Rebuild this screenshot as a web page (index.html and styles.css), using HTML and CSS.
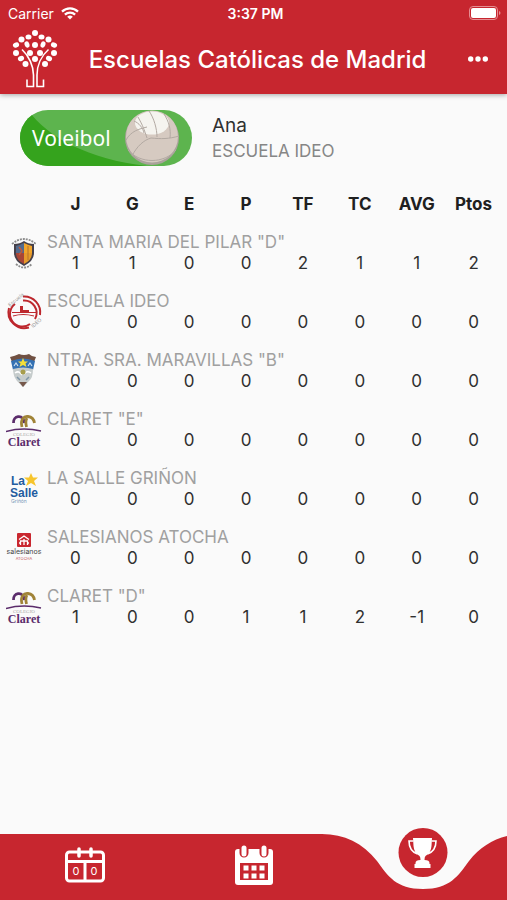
FILE: index.html
```html
<!DOCTYPE html>
<html lang="es">
<head>
    <meta charset="UTF-8">
    <meta name="viewport" content="width=device-width, initial-scale=1.0">
    <title>Escuelas Católicas de Madrid</title>
    <link rel="stylesheet" href="styles.css">
</head>
<body>
    <header class="header">
        <div class="status">
            <div class="carrier">
                Carrier
                <svg width="18" height="13" viewBox="0 0 18 13" fill="none" stroke="#fff" stroke-width="2.3">
                    <path d="M1 4.6a11.6 11.6 0 0 1 16 0"/>
                    <path d="M3.9 7.7a7.4 7.4 0 0 1 10.2 0"/>
                    <path d="M6.2 9.8a4 4 0 0 1 5.6 0L9 12.6z" fill="#fff" stroke="none"/>
                </svg>
            </div>
            <div class="clock">3:37 PM</div>
            <div class="battery">
                <svg width="32" height="14" viewBox="0 0 32 14">
                    <rect x=".5" y=".5" width="28" height="13" rx="3.5" fill="none" stroke="#e58d92"/>
                    <rect x="2" y="2" width="25" height="10" rx="2" fill="#fff"/>
                    <path d="M30 5v4q1.500-.5 1.500-2T30 5z" fill="#e58d92"/>
                </svg>
            </div>
        </div>
        <div class="title-bar">
            <svg class="logo" width="46" height="60" viewBox="0 0 46 60">
                <g fill="#fff">
                    <circle cx="23" cy="4" r="3"/>
                    <ellipse cx="16.500" cy="8" rx="3" ry="2.500"/>
                    <ellipse cx="29.500" cy="8" rx="3" ry="2.500"/>
                    <circle cx="9.500" cy="10.500" r="3"/>
                    <circle cx="36.500" cy="10.500" r="3"/>
                    <circle cx="23" cy="16" r="3"/>
                    <ellipse cx="15" cy="15.500" rx="2.400" ry="3.200" transform="rotate(-20 15 15.500)"/>
                    <ellipse cx="31" cy="15.500" rx="2.400" ry="3.200" transform="rotate(20 31 15.500)"/>
                    <ellipse cx="4" cy="16" rx="3.200" ry="2.500" transform="rotate(-25 4 16)"/>
                    <ellipse cx="42" cy="16" rx="3.200" ry="2.500" transform="rotate(25 42 16)"/>
                    <circle cx="4" cy="24" r="3"/>
                    <circle cx="42" cy="24" r="3"/>
                    <circle cx="18" cy="24" r="3"/>
                    <circle cx="28" cy="24" r="3"/>
                    <circle cx="23" cy="30" r="3"/>
                    <ellipse cx="9" cy="29.500" rx="3.200" ry="2.500" transform="rotate(-30 9 29.500)"/>
                    <ellipse cx="37" cy="29.500" rx="3.200" ry="2.500" transform="rotate(30 37 29.500)"/>
                    <circle cx="13.500" cy="35" r="3"/>
                    <circle cx="33" cy="35" r="3"/>
                </g>
                <g fill="none" stroke="#fff" stroke-width="1.600">
                    <path d="M10 20.500C17 27 21.500 37 21.500 46v11.500h-6.500v-7"/>
                    <path d="M36.500 20.500C29 27 25 37 25 46v11.500h6.500v-7"/>
                </g>
            </svg>
            <h1 class="title">Escuelas Católicas de Madrid</h1>
            <button class="menu" type="button" aria-label="Menú">
                <svg width="20" height="6" viewBox="0 0 20 6" fill="#fff">
                    <circle cx="2.700" cy="3" r="2.700"/><circle cx="10" cy="3" r="2.700"/><circle cx="17.300" cy="3" r="2.700"/>
                </svg>
            </button>
        </div>
    </header>

    <!-- shared logo, used by both Claret teams -->
    <svg class="defs" aria-hidden="true">
        <symbol id="claret" viewBox="0 0 36 36">
            <g fill="none" stroke-width="2.800">
                <path d="M7.500 11C7 4 16.500 1 18.500 11" stroke="#5b2c6b"/>
                <path d="M16 15C14 7 18 4 22 4.500S28 8 28.500 11M21 6Q19 9 20.500 15" stroke="#a08337"/>
                <path d="M0 19.500Q17 15 35 19" stroke="#5b2c6b" stroke-width="1.500"/>
            </g>
            <text x="18" y="24" class="claret-small">COLEGIO</text>
            <text x="18" y="34" class="claret-name">Claret</text>
        </symbol>
    </svg>

    <main class="content">
        <section class="profile">
            <button class="sport" type="button">
                <svg class="sport-bg" viewBox="0 0 171 56" preserveAspectRatio="none">
                    <rect width="171" height="56" fill="#5db44e"/>
                    <path d="M0 0h8C28 28 68 49 126 56H0z" fill="#35a31d"/>
                </svg>
                <span class="sport-name">Voleibol</span>
                <svg class="ball" width="56" height="56" viewBox="0 0 56 56">
                    <circle cx="28" cy="28" r="27" fill="#aaa29b"/>
                    <circle cx="28" cy="26.500" r="26" fill="#d6cac1"/>
                    <ellipse cx="28" cy="13" rx="17" ry="11.500" fill="#f5f4ef"/>
                    <g fill="none" stroke="#b2a9a2">
                        <path d="M2 30C7 21 15 19 23 17M14 7c5 9 6 12 9 21M25 1c5 7 8 18 8 26M40 4c5 8 7 15 6 24"/>
                        <path d="M8 46c5-10 12-16 19-18 10 1 18 1 28-2M10 11c5 2 9 7 10 12"/>
                        <path d="M4 40c12 14 36 14 48 0"/>
                    </g>
                </svg>
            </button>
            <div class="player">
                <div class="player-name">Ana</div>
                <div class="player-school">ESCUELA IDEO</div>
            </div>
        </section>

        <table class="standings">
            <thead>
                <tr>
                    <td class="logo-col"></td>
                    <th scope="col">J</th>
                    <th scope="col">G</th>
                    <th scope="col">E</th>
                    <th scope="col">P</th>
                    <th scope="col">TF</th>
                    <th scope="col">TC</th>
                    <th scope="col">AVG</th>
                    <th scope="col">Ptos</th>
                </tr>
            </thead>
            <tbody>
                <tr>
                    <td class="team-logo" rowspan="2">
                        <svg width="36" height="36" viewBox="0 0 36 36">
                            <path d="M6 9Q18-1 30 9M10 29q8 7 16 0" fill="none" stroke="#8b8b8b" stroke-width="1.800" stroke-dasharray="2 1"/>
                            <path d="M8 9q6 0 10-3 4 3 10 3v9q0 8-10 13-10-5-10-13z" fill="#45404a"/>
                            <path d="M10 11q4-1 8-3v10h-8z" fill="#526a8d"/>
                            <path d="M18 8q4 2 8 3v7h-8z" fill="#f1a52b"/>
                            <path d="M10 18h8v11q-8-4-8-11z" fill="#a84536"/>
                            <path d="M18 18h8q0 7-8 11z" fill="#e79a2b"/>
                            <path d="M13 12l3 4-3 4" fill="none" stroke="#c05a3c" stroke-width="1.500"/>
                            <path d="M22 11v14" fill="none" stroke="#b3702c"/>
                        </svg>
                    </td>
                    <th class="team" scope="rowgroup" colspan="8">SANTA MARIA DEL PILAR "D"</th>
                </tr>
                <tr class="values"><td>1</td><td>1</td><td>0</td><td>0</td><td>2</td><td>1</td><td>1</td><td>2</td></tr>
            </tbody>
            <tbody>
                <tr>
                    <td class="team-logo" rowspan="2">
                        <svg width="36" height="36" viewBox="0 0 36 36">
                            <g fill="none" stroke="#bd272d" stroke-width="2">
                                <path d="M17 2.500A16 16 0 0 1 34 21M3 14a16 16 0 0 0 20 19.500"/>
                                <path d="M17 6.500A12.500 12.500 0 0 1 29 25M9 10a12.500 12.500 0 0 0 15 20"/>
                                <path d="M6 18.500h24M7 22q10-3 21 0" stroke-width="1.200"/>
                            </g>
                            <path d="M14 12h3v4h6v3h-9z" fill="#bd272d"/>
                            <text x="4" y="13" class="ideo-text" transform="rotate(-40 4 13)">Escuela</text>
                            <text x="27" y="34" class="ideo-text" transform="rotate(-40 27 34)">IDEO</text>
                        </svg>
                    </td>
                    <th class="team" scope="rowgroup" colspan="8">ESCUELA IDEO</th>
                </tr>
                <tr class="values"><td>0</td><td>0</td><td>0</td><td>0</td><td>0</td><td>0</td><td>0</td><td>0</td></tr>
            </tbody>
            <tbody>
                <tr>
                    <td class="team-logo" rowspan="2">
                        <svg width="36" height="36" viewBox="0 0 36 36">
                            <path d="M4 4q5-1 9-3 5 2 10 0 3 3 7 3l-2 5q-10-4-22 0z" fill="#705042"/>
                            <path d="M5 8q12-5 24 0l-2 9q-9-3-20 0z" fill="#3471b3"/>
                            <path d="M7 16q10-3 20 0 0 9-4 12l-6 6-6-6q-4-5-4-12z" fill="#c6cccc"/>
                            <path d="M17 5l1.500 3.500h3.500l-2.500 2 1 3.500-3.500-2-3.500 2 1-3.500-2.500-2h3.500z" fill="#f5df38"/>
                            <path d="M8 13l2-3 2 3M22 13l2-3 2 3" fill="none" stroke="#cfe0ee" stroke-width="1.200"/>
                            <path d="M9 20q4-3 7 2M18 21q3-4 7-1" fill="none" stroke="#fff" stroke-width="1.500"/>
                            <circle cx="17" cy="19" r="2.500" fill="#a79d4c"/>
                            <path d="M11 24l3 3M23 24l-3 3" fill="none" stroke="#7f96a8" stroke-width="1.500"/>
                            <path d="M13 29h8l-4 5z" fill="#76584b"/>
                        </svg>
                    </td>
                    <th class="team" scope="rowgroup" colspan="8">NTRA. SRA. MARAVILLAS "B"</th>
                </tr>
                <tr class="values"><td>0</td><td>0</td><td>0</td><td>0</td><td>0</td><td>0</td><td>0</td><td>0</td></tr>
            </tbody>
            <tbody>
                <tr>
                    <td class="team-logo" rowspan="2"><svg width="36" height="36"><use href="#claret"/></svg></td>
                    <th class="team" scope="rowgroup" colspan="8">CLARET "E"</th>
                </tr>
                <tr class="values"><td>0</td><td>0</td><td>0</td><td>0</td><td>0</td><td>0</td><td>0</td><td>0</td></tr>
            </tbody>
            <tbody>
                <tr>
                    <td class="team-logo" rowspan="2">
                        <svg width="36" height="36" viewBox="0 0 36 36">
                            <path d="M25 2l2 4.500h5l-4 3.500 2 5-5-3-5 3 2-5-4-3.500h5z" fill="#f7c52d"/>
                            <text x="5" y="14" class="salle-text">La</text>
                            <text x="4" y="26" class="salle-text">Salle</text>
                            <text x="5" y="32" class="salle-small">Griñón</text>
                        </svg>
                    </td>
                    <th class="team" scope="rowgroup" colspan="8">LA SALLE GRIÑON</th>
                </tr>
                <tr class="values"><td>0</td><td>0</td><td>0</td><td>0</td><td>0</td><td>0</td><td>0</td><td>0</td></tr>
            </tbody>
            <tbody>
                <tr>
                    <td class="team-logo" rowspan="2">
                        <svg width="36" height="36" viewBox="0 0 36 36">
                            <rect x="11" y="3" width="14" height="14" rx="1" fill="#c9272f"/>
                            <g fill="none" stroke="#fff" stroke-width="1.300">
                                <path d="M13 9.500l5-3.500 5 3.500M14.500 15v-4h7v4M18 15v-6M13 13h2M21 13h2"/>
                            </g>
                            <text x="18" y="24" class="sales-name">salesianos</text>
                            <text x="18" y="30" class="sales-small">ATOCHA</text>
                        </svg>
                    </td>
                    <th class="team" scope="rowgroup" colspan="8">SALESIANOS ATOCHA</th>
                </tr>
                <tr class="values"><td>0</td><td>0</td><td>0</td><td>0</td><td>0</td><td>0</td><td>0</td><td>0</td></tr>
            </tbody>
            <tbody>
                <tr>
                    <td class="team-logo" rowspan="2"><svg width="36" height="36"><use href="#claret"/></svg></td>
                    <th class="team" scope="rowgroup" colspan="8">CLARET "D"</th>
                </tr>
                <tr class="values"><td>1</td><td>0</td><td>0</td><td>1</td><td>1</td><td>2</td><td>-1</td><td>0</td></tr>
            </tbody>
        </table>
    </main>

    <nav class="tabs">
        <a class="tab" href="#resultados" aria-label="Resultados">
            <svg width="40" height="36" viewBox="0 0 40 36">
                <rect x="1.500" y="5" width="37" height="29" rx="3" fill="none" stroke="#fff" stroke-width="3"/>
                <path d="M2 14.500h36M20 14v20" stroke="#fff" stroke-width="3"/>
                <path d="M14 2v7M26 2v7" stroke="#fff" stroke-width="3.500" stroke-linecap="round"/>
                <text x="11" y="28" class="score">0</text>
                <text x="29" y="28" class="score">0</text>
            </svg>
        </a>
        <a class="tab" href="#calendario" aria-label="Calendario">
            <svg width="40" height="42" viewBox="0 0 40 42">
                <rect x="1" y="5" width="38" height="36" rx="3" fill="#fff"/>
                <rect x="6" y="19" width="28" height="17" fill="#c7262f"/>
                <path d="M10 0v9M30 0v9" stroke="#c7262f" stroke-width="9" stroke-linecap="round"/>
                <path d="M10 4v6M30 4v6" stroke="#fff" stroke-width="5" stroke-linecap="round"/>
                <path d="M9.500 21.500h5v5h-5zM17.500 21.500h5v5h-5zM25.500 21.500h5v5h-5zM9.500 29.500h5v5h-5zM17.500 29.500h5v5h-5zM25.500 29.500h5v5h-5z" fill="#fff"/>
            </svg>
        </a>
        <a class="tab active" href="#clasificacion" aria-label="Clasificación">
            <svg class="notch" width="202" height="56" viewBox="0 0 202 56">
                <path d="M0 0C22 0 41 9 55 27C66 42 74 55 101 55S136 42 147 27C161 9 180 0 202 0z" fill="#fafafa"/>
            </svg>
            <span class="bubble">
                <svg width="30" height="32" viewBox="0 0 30 32">
                    <path d="M5.500 1h19l-.5 8q-.5 7-6 10-1 1-1 4 5 0 5 3v1h1v4H7v-4h1v-1q0-3 5-3 0-3-1-4-5.500-3-6-10z" fill="#fff"/>
                    <path d="M6 4H1.500q0 10 8.500 13M24 4h4.500q0 10-8.500 13" fill="none" stroke="#fff" stroke-width="1.600"/>
                </svg>
            </span>
        </a>
    </nav>
</body>
</html>
```

FILE: styles.css
```css
* {
    margin: 0;
    padding: 0;
    box-sizing: border-box;
}

body {
    min-height: 100vh;
    display: flex;
    flex-direction: column;
    overflow-x: hidden;
    background-color: #fafafa;
    color: #303030;
    font-family: Inter, "Liberation Sans", sans-serif;
    font-size: 17px;
    line-height: 21px;
}

button {
    border: none;
    background: none;
    color: inherit;
    font: inherit;
    cursor: pointer;
}

svg {
    display: block;
}

.defs {
    position: absolute;
    width: 0;
    height: 0;
}

/* header */
.header {
    background-color: #c7262f;
    color: #fff;
    box-shadow: 0 1px 5px rgba(0, 0, 0, 0.35);
}

.status {
    display: grid;
    grid-template-columns: 1fr auto 1fr;
    align-items: center;
    height: 28px;
    padding: 0 6px 2px 8px;
    font-size: 14px;
}

.carrier {
    display: flex;
    align-items: center;
    gap: 7px;
}

.clock {
    padding-left: 2px;
    font-weight: 600;
}

.battery {
    justify-self: end;
}

.title-bar {
    display: flex;
    align-items: center;
    height: 66px;
    padding: 0 16px 4px 12px;
}

.title {
    flex: 1;
    padding-top: 2px;
    padding-right: 8px;
    font-size: 24px;
    font-weight: 500;
    line-height: 32px;
    text-align: center;
}

.menu {
    padding: 10px 3px;
}

/* selected sport and player */
.content {
    flex: 1;
}

.profile {
    display: flex;
    align-items: center;
    gap: 20px;
    padding: 16px 20px 28px;
}

.sport {
    position: relative;
    display: flex;
    align-items: center;
    justify-content: space-between;
    width: 172px;
    height: 56px;
    padding: 0 12px;
    border-radius: 28px;
    overflow: hidden;
    color: #fff;
}

.sport-bg {
    position: absolute;
    inset: 0;
    width: 100%;
    height: 100%;
}

.sport-name {
    position: relative;
    font-family: "Noto Sans", sans-serif;
    font-size: 21px;
}

.ball {
    position: relative;
}

.player-name {
    font-size: 19px;
    line-height: 26px;
}

.player-school {
    color: #868686;
    line-height: 24px;
}

/* standings */
.standings {
    width: 100%;
    padding-right: 5px;
    border-spacing: 0;
    table-layout: fixed;
    text-align: center;
}

.logo-col {
    width: 47px;
}

.standings thead th {
    padding-bottom: 17px;
    color: #202020;
    font-weight: 700;
}

.standings .team {
    color: #a0a0a0;
    font-weight: 400;
    text-align: left;
}

.values td {
    padding-bottom: 17px;
}

.team-logo {
    padding: 3px 0 20px 6px;
    vertical-align: top;
}

.team-logo svg {
    overflow: visible;
}

.claret-name {
    fill: #5b2c6b;
    font: bold 12px "Liberation Serif", serif;
    text-anchor: middle;
}

.claret-small {
    fill: #aaa;
    font: 5px "Liberation Serif", serif;
    text-anchor: middle;
}

.ideo-text {
    fill: #999;
    font-size: 5px;
}

.salle-text {
    fill: #235c9f;
    font: bold 12px "Liberation Sans", sans-serif;
}

.salle-small {
    fill: #7797b8;
    font-size: 5px;
}

.sales-name {
    fill: #444;
    font-size: 7px;
    text-anchor: middle;
}

.sales-small {
    fill: #c9585f;
    font-size: 4px;
    text-anchor: middle;
}

/* bottom tabs */
.tabs {
    display: grid;
    grid-template-columns: repeat(3, 1fr);
    height: 66px;
    background-color: #c7262f;
}

.tab {
    position: relative;
    display: flex;
    align-items: center;
    justify-content: center;
    padding-bottom: 4px;
}

.score {
    fill: #fff;
    font-size: 11px;
    text-anchor: middle;
}

.notch {
    position: absolute;
    top: 0;
    left: 50%;
    transform: translateX(-50%);
}

.bubble {
    position: absolute;
    top: -6px;
    left: 50%;
    display: flex;
    align-items: center;
    justify-content: center;
    width: 49px;
    height: 49px;
    border-radius: 50%;
    background-color: #c7262f;
    transform: translateX(-50%);
}
```
